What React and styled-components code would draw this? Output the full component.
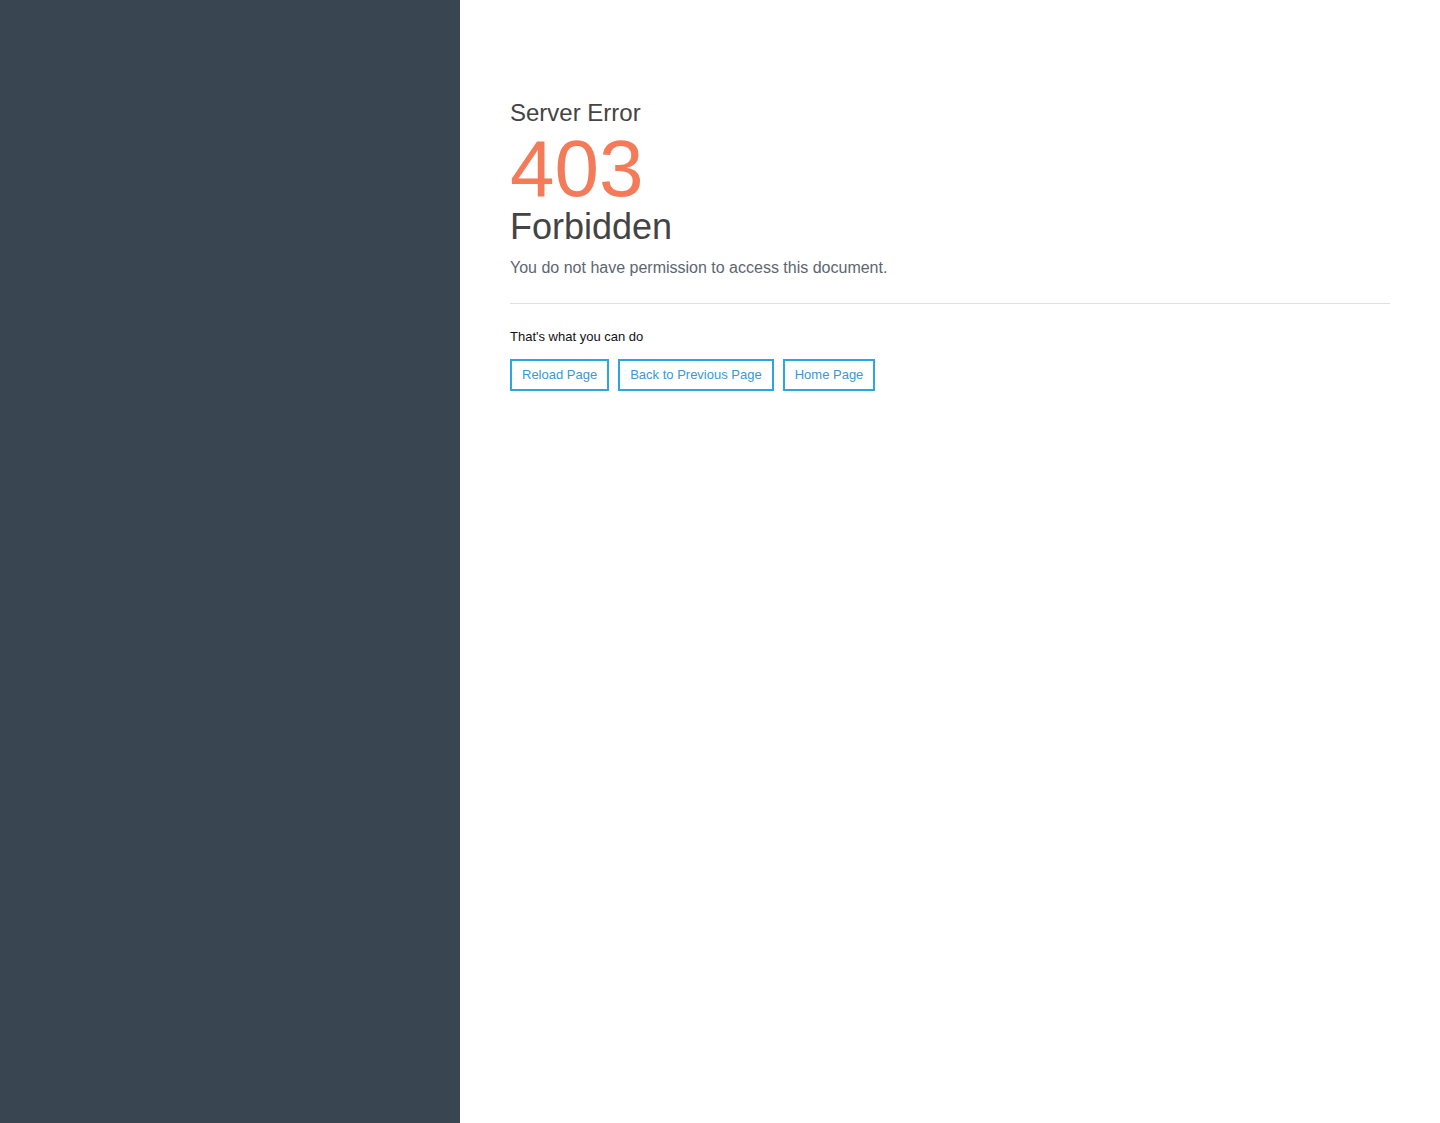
import styled, { createGlobalStyle } from 'styled-components'

const GlobalStyle = createGlobalStyle`
  html, body {
    margin: 0;
    padding: 0;
    height: 100%;
  }
  body {
    font-family: "Liberation Sans", Helvetica, Arial, sans-serif;
    background: #fff;
  }
  #root {
    height: 100%;
  }
`

const Page = styled.div`
  display: flex;
  min-height: 1123px;
`

const Sidebar = styled.aside`
  width: 460px;
  flex-shrink: 0;
  background: #394550;
`

const Main = styled.main`
  flex: 1;
  padding: 99px 50px 0 50px;
`

const Subtitle = styled.h2`
  margin: 0;
  font-size: 24px;
  font-weight: 400;
  line-height: 28px;
  color: #444;
`

const Code = styled.div`
  font-size: 80px;
  line-height: 84px;
  color: #f47b59;
`

const Title = styled.h1`
  margin: -3px 0 0;
  font-size: 36px;
  font-weight: 400;
  line-height: 38px;
  color: #444;
`

const Message = styled.p`
  margin: 12px 0 0;
  font-size: 16px;
  line-height: 20px;
  color: #5d6671;
`

const Divider = styled.hr`
  margin: 25px 0 0;
  border: 0;
  border-top: 1px solid #dfdfdf;
`

const Hint = styled.p`
  margin: 25px 0 0;
  font-size: 13px;
  line-height: 16px;
  color: #111;
`

const Actions = styled.div`
  display: flex;
  gap: 9px;
  margin-top: 14px;
`

const ActionButton = styled.a`
  display: inline-block;
  padding: 0 10px;
  height: 32px;
  line-height: 28px;
  box-sizing: border-box;
  border: 2px solid #2aa7e0;
  font-size: 13px;
  color: #3a98d8;
  text-decoration: none;
  cursor: pointer;
`

export default function App() {
  return (
    <>
      <GlobalStyle />
      <Page>
        <Sidebar />
        <Main>
          <Subtitle>Server Error</Subtitle>
          <Code>403</Code>
          <Title>Forbidden</Title>
          <Message>You do not have permission to access this document.</Message>
          <Divider />
          <Hint>That's what you can do</Hint>
          <Actions>
            <ActionButton onClick={() => window.location.reload()}>Reload Page</ActionButton>
            <ActionButton onClick={() => window.history.back()}>Back to Previous Page</ActionButton>
            <ActionButton href="/">Home Page</ActionButton>
          </Actions>
        </Main>
      </Page>
    </>
  )
}
